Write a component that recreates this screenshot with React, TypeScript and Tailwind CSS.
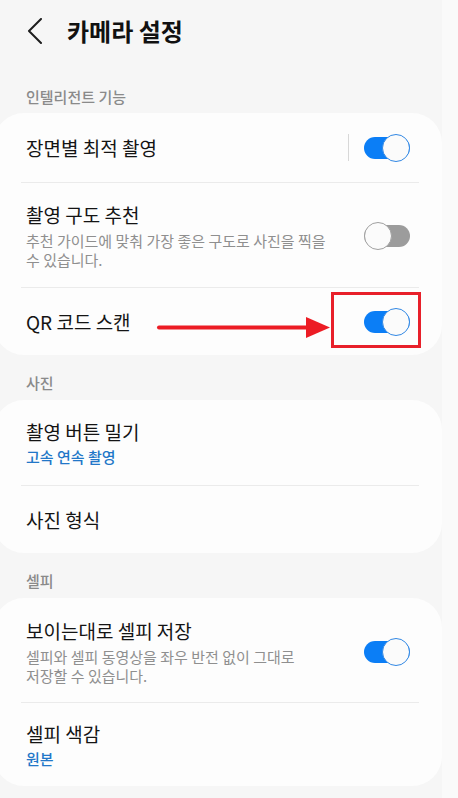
import React from "react";

const font = { fontFamily: '"Noto Sans CJK KR", "Noto Sans", sans-serif' };

function Toggle({ on }: { on: boolean }) {
  return (
    <div className="relative w-[46px] h-[28px] flex items-center shrink-0">
      <div className={`w-full h-[22px] rounded-full ${on ? "bg-[#0b7ef6]" : "bg-[#9c9c9c]"}`} />
      <div
        className={`absolute top-0 w-[28px] h-[28px] rounded-full bg-[#fbfbfb] border-[1.5px] ${
          on ? "right-0 border-[#3288e4]" : "left-0 border-[#a0a0a0]"
        }`}
      />
    </div>
  );
}

function Divider() {
  return <div className="h-px bg-[#ebebeb] ml-[27px] mr-[23px]" />;
}

function SectionHeader({ text, pt }: { text: string; pt: string }) {
  return (
    <div className={`${pt} pb-[7px] px-[26px] text-[15px] leading-[20px] font-medium text-[#8a8a8a]`}>
      {text}
    </div>
  );
}

export default function App() {
  return (
    <div className="relative flex w-[458px] min-h-[798px] bg-[#fafafa]" style={font}>
      <div className="w-[442px] min-h-[798px] bg-[#f6f6f6]">
        {/* Header */}
        <div className="h-[62px] flex items-center pl-[27px]">
          <svg width="16" height="26" viewBox="0 0 16 26" className="shrink-0">
            <polyline points="14,1 2,13 14,25" fill="none" stroke="#1e1e1e" strokeWidth="2" strokeLinecap="round" strokeLinejoin="round" />
          </svg>
          <div className="ml-[24px] text-[24px] leading-[30px] font-bold text-[#111111]">카메라 설정</div>
        </div>

        <div className="pt-[25px] pb-[6px] px-[26px] text-[15px] leading-[20px] font-medium text-[#8a8a8a]">
          인텔리전트 기능
        </div>

        {/* Card 1 */}
        <div className="-ml-[6px] w-[448px] rounded-[30px] bg-[#fdfdfd]">
          <div className="h-[69px] flex items-center justify-between pl-[32px] pr-[32px]">
            <div className="text-[19px] leading-[24px] text-[#141414]">장면별 최적 촬영</div>
            <div className="flex items-center">
              <div className="w-px h-[27px] bg-[#d8d8d8] mr-[15px]" />
              <Toggle on />
            </div>
          </div>
          <Divider />
          <div className="flex items-center justify-between pl-[32px] pr-[32px] pt-[20px] pb-[18px]">
            <div>
              <div className="text-[19px] leading-[24px] text-[#141414]">촬영 구도 추천</div>
              <div className="mt-[4px] text-[15px] leading-[19px] text-[#8f8f8f]">
                추천 가이드에 맞춰 가장 좋은 구도로 사진을 찍을
                <br />수 있습니다.
              </div>
            </div>
            <Toggle on={false} />
          </div>
          <Divider />
          <div className="h-[67px] flex items-center justify-between pl-[32px] pr-[32px]">
            <div className="text-[19px] leading-[24px] text-[#141414]">QR 코드 스캔</div>
            <Toggle on />
          </div>
        </div>

        <SectionHeader text="사진" pt="pt-[18px]" />

        {/* Card 2 */}
        <div className="-ml-[6px] w-[448px] rounded-[30px] bg-[#fdfdfd]">
          <div className="pl-[32px] pr-[32px] pt-[20px] pb-[18px]">
            <div className="text-[19px] leading-[24px] text-[#141414]">촬영 버튼 밀기</div>
            <div className="mt-[3px] text-[15px] leading-[20px] font-medium text-[#2277c8]">고속 연속 촬영</div>
          </div>
          <Divider />
          <div className="h-[67px] flex items-center pl-[32px] pr-[32px]">
            <div className="text-[19px] leading-[24px] text-[#141414]">사진 형식</div>
          </div>
        </div>

        <SectionHeader text="셀피" pt="pt-[18px]" />

        {/* Card 3 */}
        <div className="-ml-[6px] w-[448px] rounded-[30px] bg-[#fdfdfd]">
          <div className="flex items-center justify-between pl-[32px] pr-[32px] pt-[21px] pb-[17px]">
            <div>
              <div className="text-[19px] leading-[24px] text-[#141414]">보이는대로 셀피 저장</div>
              <div className="mt-[4px] text-[15px] leading-[19px] text-[#8f8f8f]">
                셀피와 셀피 동영상을 좌우 반전 없이 그대로
                <br />저장할 수 있습니다.
              </div>
            </div>
            <Toggle on />
          </div>
          <Divider />
          <div className="pl-[32px] pr-[32px] pt-[19px] pb-[17px]">
            <div className="text-[19px] leading-[24px] text-[#141414]">셀피 색감</div>
            <div className="mt-[3px] text-[15px] leading-[20px] font-medium text-[#2277c8]">원본</div>
          </div>
        </div>
      </div>

      {/* Annotation overlay: arrow and red box */}
      <svg className="absolute left-0 top-0 pointer-events-none" width="458" height="798">
        <line x1="159" y1="327.5" x2="310" y2="327.5" stroke="#ec1c24" strokeWidth="4" strokeLinecap="round" />
        <polygon points="306,317 330,327.5 306,338" fill="#ec1c24" />
      </svg>
      <div className="absolute left-[331px] top-[292px] w-[90px] h-[56px] border-[3px] border-[#e8202a] pointer-events-none" />
    </div>
  );
}
